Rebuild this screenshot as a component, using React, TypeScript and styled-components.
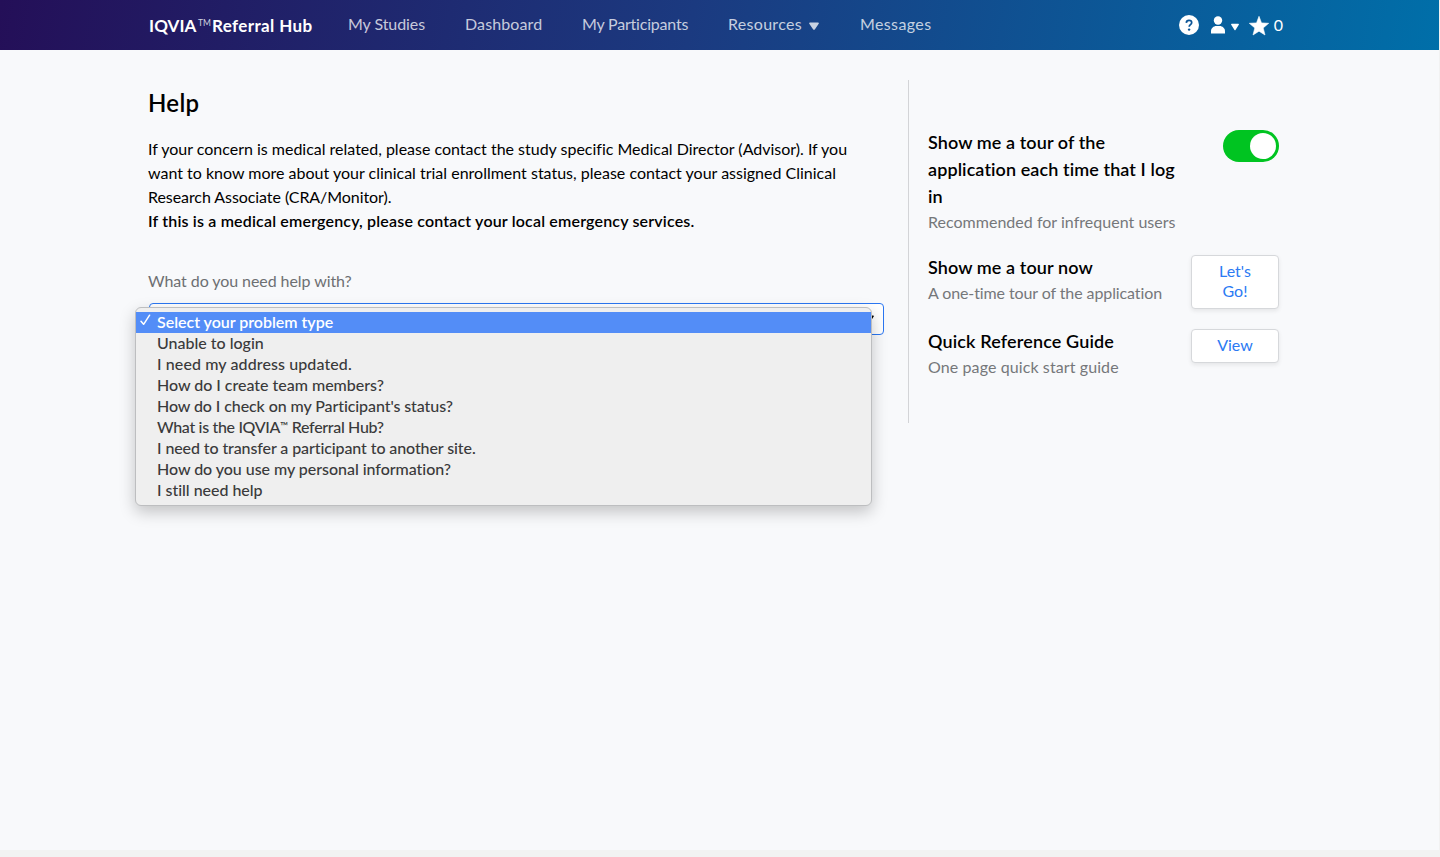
import React from "react";
import styled, { createGlobalStyle } from "styled-components";

const GlobalStyle = createGlobalStyle`
  * { box-sizing: border-box; }
  body {
    margin: 0;
    background: #f2f2f2;
    font-family: Lato, "Liberation Sans", sans-serif;
    font-size: 16px;
    line-height: 24px;
    font-variant-ligatures: none;
    color: #000;
  }
`;

const Page = styled.div`
  width: 1439px;
  height: 850px;
  background: #f8f9fb;
`;

const Header = styled.header`
  height: 50px;
  padding: 0 156px 0 149px;
  display: flex;
  align-items: center;
  color: #fff;
  background: linear-gradient(100deg, #240f58 0%, #1b3a80 48%, #006fa9 100%);
`;

const Brand = styled.div`
  display: flex;
  width: 199px;
  padding-top: 2px;
  font-size: 17px;
  font-weight: 700;
  letter-spacing: 0.38px;
  white-space: nowrap;
`;

const BrandName = styled.span`
  width: 48px;
  letter-spacing: 0.1px;
`;

const Trademark = styled.span`
  width: 12px;
  margin: -1px 2px 0 1px;
  font-size: 8.5px;
  font-weight: 400;
  line-height: 20px;
  letter-spacing: 0;
  color: rgba(255, 255, 255, 0.8);
`;

const Nav = styled.nav`
  display: flex;
  flex: 1;
  gap: 40px;
  padding-bottom: 2px;
`;

const NavItem = styled.a<{ $width: number; $tracking?: number }>`
  display: flex;
  align-items: center;
  justify-content: space-between;
  width: ${(p) => p.$width}px;
  letter-spacing: ${(p) => p.$tracking ?? 0}px;
  white-space: nowrap;
  color: rgba(255, 255, 255, 0.76);
  svg { margin: 3px 1px 0 -1px; }
`;

const Tools = styled.div`
  display: flex;
  align-items: center;
  svg { display: block; }
`;

const Count = styled.span`
  margin: 0 0 0 5px;
`;

const Content = styled.main`
  display: flex;
  padding: 30px 0 0 148px;
`;

const HelpColumn = styled.section`
  width: 736px;
  margin-right: 24px;
`;

const Title = styled.h1`
  margin: 8px 0 19px;
  font-size: 24px;
  line-height: 30px;
  font-weight: 600;
  letter-spacing: 0.3px;
`;

const Line = styled.div<{ $tracking?: number; $strong?: boolean }>`
  white-space: nowrap;
  font-weight: ${(p) => (p.$strong ? 600 : 400)};
  letter-spacing: ${(p) => p.$tracking ?? 0}px;
`;

const Label = styled.label`
  display: block;
  margin: 36px 0 10px;
  letter-spacing: -0.07px;
  color: #6d6f72;
`;

const SelectWrap = styled.div`
  position: relative;
`;

const SelectBox = styled.div`
  display: flex;
  justify-content: flex-end;
  height: 32px;
  margin-left: 1px;
  padding: 11px 9px 0 0;
  border: 1px solid #2b77f2;
  border-radius: 4px;
  background: #fff;
`;

const Menu = styled.ul`
  position: absolute;
  left: -13px;
  top: 4px;
  width: 737px;
  height: 199px;
  margin: 0;
  padding: 4px 0 0;
  list-style: none;
  border: 1px solid #bdbec0;
  border-radius: 6px;
  background: #efefef;
  box-shadow: 0 6px 16px rgba(0, 0, 0, 0.22);
`;

const Option = styled.li<{ $selected?: boolean; $tracking?: number }>`
  display: flex;
  height: 21px;
  line-height: 20px;
  white-space: nowrap;
  font-weight: ${(p) => (p.$selected ? 600 : 500)};
  color: ${(p) => (p.$selected ? "#fff" : "#3a3a3b")};
  background: ${(p) => (p.$selected ? "#538df7" : "transparent")};
  letter-spacing: ${(p) => p.$tracking ?? 0}px;
`;

const CheckSlot = styled.span`
  width: 21px;
  padding: 2px 0 0 4px;
  svg { display: block; }
`;

const SmallMark = styled.span`
  font-size: 11px;
  position: relative;
  top: -3px;
`;

const TourColumn = styled.aside`
  width: 371px;
  height: 343px;
  padding: 50px 0 0 19px;
  border-left: 1px solid #d3d4d7;
  display: flex;
  flex-direction: column;
  gap: 20px;
`;

const Setting = styled.div`
  display: flex;
  justify-content: space-between;
  align-items: flex-start;
`;

const SettingText = styled.div`
  margin: -1px 0 1px;
`;

const SettingTitle = styled.div<{ $tracking?: number }>`
  font-size: 18px;
  line-height: 27px;
  font-weight: 600;
  white-space: nowrap;
  letter-spacing: ${(p) => p.$tracking ?? 0}px;
`;

const SettingNote = styled.div<{ $tracking?: number }>`
  color: #75777a;
  white-space: nowrap;
  letter-spacing: ${(p) => p.$tracking ?? 0}px;
`;

const Switch = styled.div`
  display: flex;
  justify-content: flex-end;
  width: 56px;
  height: 32px;
  padding: 3px;
  border-radius: 16px;
  background: #00c421;
`;

const Knob = styled.div`
  width: 26px;
  height: 26px;
  border-radius: 50%;
  background: #fff;
`;

const Button = styled.button`
  width: 88px;
  padding: 5px 22px 7px;
  border: 1px solid #d6d8db;
  border-radius: 4px;
  background: #fff;
  box-shadow: 0 2px 4px rgba(0, 0, 0, 0.08);
  font: inherit;
  line-height: 20px;
  color: #2b7af3;
`;

const HelpIcon = styled.svg`
  margin-right: 12px;
`;

const UserCaret = styled.svg`
  margin: 3px 10px 0 6px;
`;

const StarIcon = styled.svg`
  margin-top: 2px;
`;

const Caret = ({ width = 10 }: { width?: number }) => (
  <svg width={width} height={width * 0.8} viewBox="0 0 10 8">
    <path d="M1 .5h8c.8 0 1.100.6.7 1.300L5.800 7.400c-.4.600-1.200.600-1.600 0L.300 1.800C-.1 1.100.200.5 1 .5z" fill="currentColor" />
  </svg>
);

const options: { id: string; text: React.ReactNode; tracking?: number }[] = [
  { id: "none", text: "Select your problem type", tracking: -0.02 },
  { id: "login", text: "Unable to login" },
  { id: "address", text: "I need my address updated.", tracking: 0.1 },
  { id: "team", text: "How do I create team members?", tracking: -0.02 },
  { id: "status", text: "How do I check on my Participant's status?", tracking: -0.09 },
  {
    id: "about",
    text: (
      <span>
        What is the IQVIA<SmallMark>™</SmallMark> Referral Hub?
      </span>
    ),
    tracking: -0.33,
  },
  { id: "transfer", text: "I need to transfer a participant to another site.", tracking: -0.1 },
  { id: "privacy", text: "How do you use my personal information?", tracking: -0.04 },
  { id: "other", text: "I still need help", tracking: -0.03 },
];

export default function App() {
  return (
    <>
      <GlobalStyle />
      <Page>
        <Header>
          <Brand>
            <BrandName>IQVIA</BrandName>
            <Trademark>TM</Trademark>
            <span>Referral Hub</span>
          </Brand>
          <Nav>
            <NavItem $width={77} $tracking={-0.07}>My Studies</NavItem>
            <NavItem $width={77} $tracking={0.12}>Dashboard</NavItem>
            <NavItem $width={106} $tracking={-0.2}>My Participants</NavItem>
            <NavItem $width={92} $tracking={0.3}>
              Resources <Caret />
            </NavItem>
            <NavItem $width={71} $tracking={0.38}>Messages</NavItem>
          </Nav>
          <Tools>
            <HelpIcon width="20" height="20" viewBox="0 0 20 20">
              <circle cx="10" cy="10" r="10" fill="#fff" />
              <path d="M7.300 7.900c.1-1.600 1.200-2.500 2.700-2.500s2.700.9 2.700 2.300c0 1.900-2.500 2-2.500 4" fill="none" stroke="#0b5496" strokeWidth="1.700" />
              <circle cx="10.100" cy="14.600" r="1.200" fill="#0b5496" />
            </HelpIcon>
            <svg width="14" height="18" viewBox="0 0 14 18">
              <circle cx="7" cy="4.500" r="4.200" fill="#fff" />
              <path d="M0 17.500v-2.300c0-3 2.700-5.200 5.300-5.200h3.400c2.600 0 5.300 2.200 5.300 5.200v2.300z" fill="#fff" />
            </svg>
            <UserCaret width="8" height="8" viewBox="0 0 8 8">
              <path d="M.7.800h6.600c.6 0 .8.500.5.900L4.500 7c-.3.400-.7.400-1 0L.200 1.700C-.1 1.300.100.800.7.800z" fill="#fff" />
            </UserCaret>
            <StarIcon width="20" height="20" viewBox="0 0 20 20">
              <path d="M10 .3 12.500 6.900 19.700 7.300 14.200 11.900 16 19 10 15.200 4 19 5.800 11.900.3 7.300 7.500 6.900z" fill="#fff" stroke="#fff" strokeWidth=".6" strokeLinejoin="round" />
            </StarIcon>
            <Count>0</Count>
          </Tools>
        </Header>
        <Content>
          <HelpColumn>
            <Title>Help</Title>
            <Line $tracking={-0.01}>If your concern is medical related, please contact the study specific Medical Director (Advisor). If you</Line>
            <Line>want to know more about your clinical trial enrollment status, please contact your assigned Clinical</Line>
            <Line $tracking={-0.07}>Research Associate (CRA/Monitor).</Line>
            <Line $strong $tracking={0.17}>If this is a medical emergency, please contact your local emergency services.</Line>
            <Label>What do you need help with?</Label>
            <SelectWrap>
              <SelectBox>
                <Caret width={9} />
              </SelectBox>
              <Menu>
                {options.map((o, i) => (
                  <Option key={o.id} $selected={i === 0} $tracking={o.tracking}>
                    <CheckSlot>
                      {i === 0 && (
                        <svg width="11" height="12" viewBox="0 0 11 12">
                          <path d="M1 7.200 3.600 10.300 9.600 1.200" fill="none" stroke="#fff" strokeWidth="1.500" strokeLinecap="round" strokeLinejoin="round" />
                        </svg>
                      )}
                    </CheckSlot>
                    {o.text}
                  </Option>
                ))}
              </Menu>
            </SelectWrap>
          </HelpColumn>
          <TourColumn>
            <Setting>
              <SettingText>
                <SettingTitle $tracking={0.09}>
                  Show me a tour of the
                  <br />
                  application each time that I log
                  <br />
                  in
                </SettingTitle>
                <SettingNote $tracking={0.02}>Recommended for infrequent users</SettingNote>
              </SettingText>
              <Switch>
                <Knob />
              </Switch>
            </Setting>
            <Setting>
              <SettingText>
                <SettingTitle $tracking={0.1}>Show me a tour now</SettingTitle>
                <SettingNote $tracking={-0.1}>A one-time tour of the application</SettingNote>
              </SettingText>
              <Button>Let's Go!</Button>
            </Setting>
            <Setting>
              <SettingText>
                <SettingTitle $tracking={0.14}>Quick Reference Guide</SettingTitle>
                <SettingNote $tracking={0.1}>One page quick start guide</SettingNote>
              </SettingText>
              <Button>View</Button>
            </Setting>
          </TourColumn>
        </Content>
      </Page>
    </>
  );
}
